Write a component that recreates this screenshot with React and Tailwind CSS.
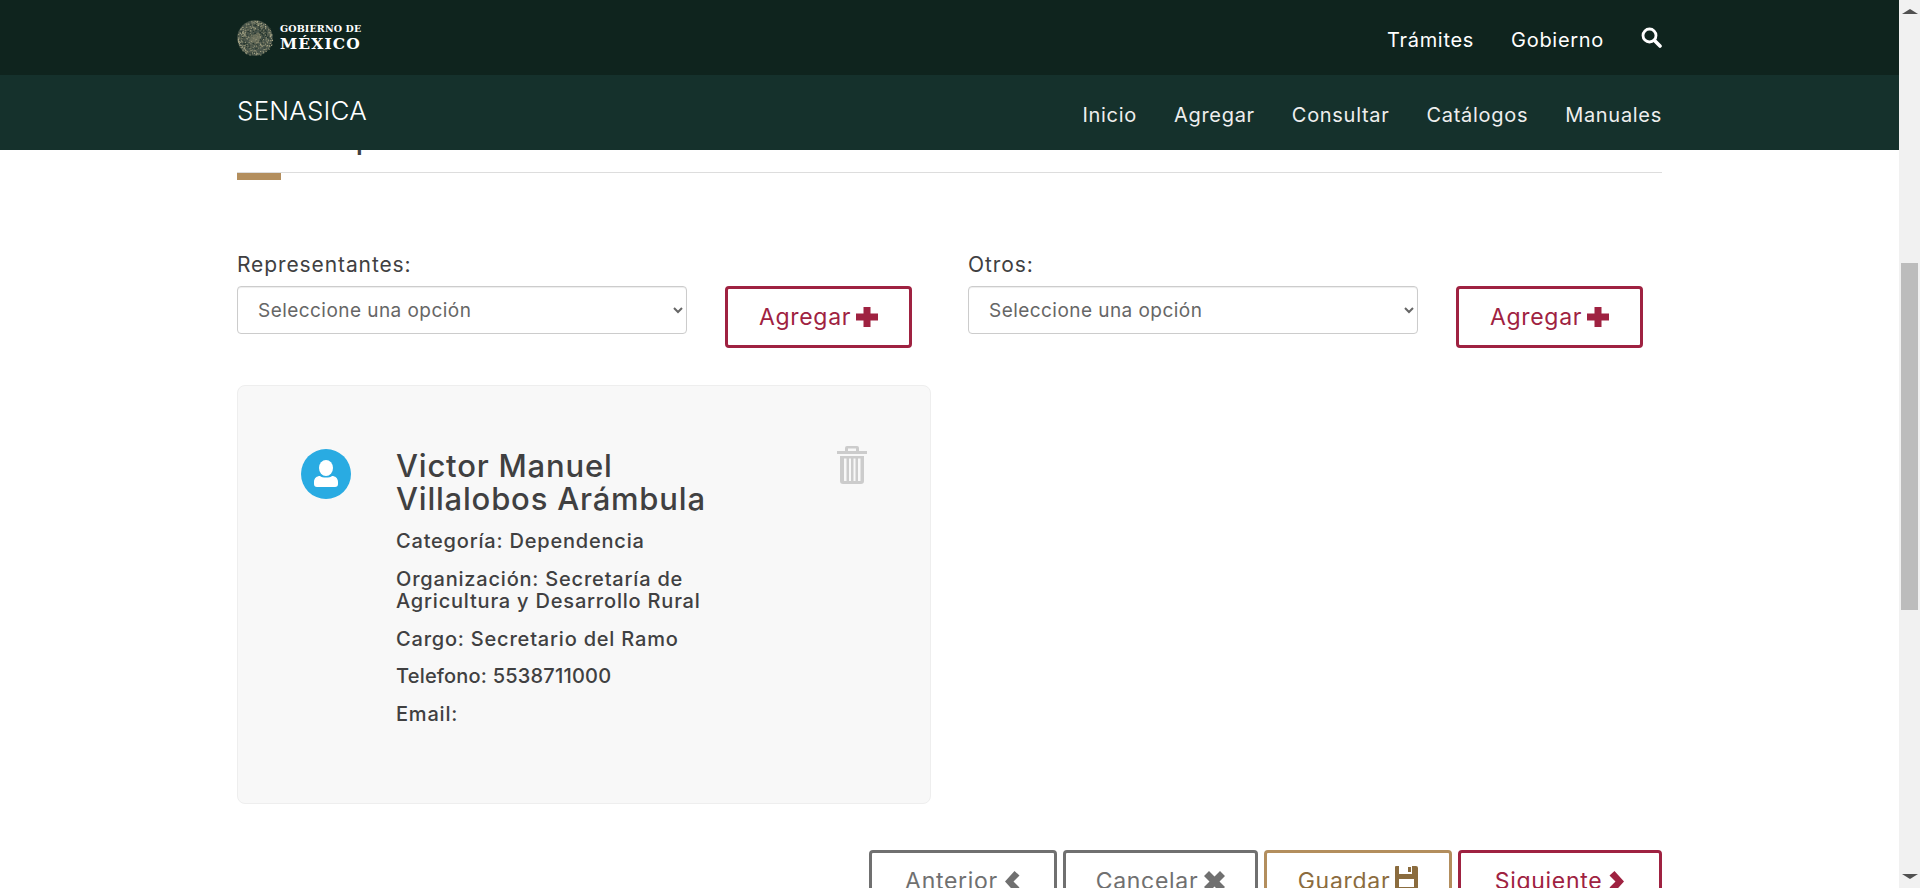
import React from "react";

const font = { fontFamily: "Inter, 'Noto Sans', sans-serif" };

function Emblem() {
  const dots = [];
  let seed = 17;
  const next = () => {
    seed = (seed * 16807) % 2147483647;
    return seed / 2147483647;
  };
  for (let i = 0; i < 520; i++) {
    const a = next() * Math.PI * 2;
    const r = 17.6 * Math.sqrt(next());
    const t = next();
    const tone = r > 13 ? (t < 0.5 ? "#b3b08f" : t < 0.8 ? "#757860" : "#26352d") : t < 0.3 ? "#a5a384" : t < 0.65 ? "#5f6452" : "#1f3029";
    dots.push(<rect key={i} x={18 + r * Math.cos(a)} y={18 + r * Math.sin(a)} width="1" height="1" fill={tone} />);
  }
  return (
    <svg width="36" height="36" viewBox="0 0 36 36" fill="none">
      <circle cx="18" cy="18" r="17.8" fill="#48544a" />
      {dots}
      <path d="M12 21c1-4 4-7 7-7 1-2 3-2 4 0l2 1-2 1c1 3 0 6-3 7l-1 2-2-2c-2 0-4-.5-5-2z" fill="#8f8e72" opacity="0.5" />
    </svg>
  );
}

function Logo() {
  return (
    <div className="flex items-center gap-[7px]">
      <Emblem />
      <div className="text-white" style={{ fontFamily: "'DejaVu Serif', 'Liberation Serif', serif" }}>
        <div className="text-[9.5px] font-bold leading-[12px] tracking-[0.15px] whitespace-nowrap">GOBIERNO DE</div>
        <div className="text-[15.5px] font-bold leading-[17px] tracking-[1.15px] whitespace-nowrap">MÉXICO</div>
      </div>
    </div>
  );
}

function SearchIcon() {
  return (
    <svg width="21" height="21" viewBox="0 0 21 21" fill="none" className="-mt-[1px]">
      <circle cx="8.500" cy="8.500" r="6.500" stroke="#ffffff" strokeWidth="2.800" />
      <path d="M13.500 13.500L19 19" stroke="#ffffff" strokeWidth="3.600" strokeLinecap="round" />
    </svg>
  );
}

function Header() {
  return (
    <header className="relative z-10 shrink-0 text-white">
      <div className="h-[75px] bg-[#0f241e]">
        <div className="mx-[237px] h-full flex items-center justify-between">
          <Logo />
          <nav className="flex items-center gap-[37px] text-[20px] tracking-[0.7px]">
            <span className="mt-[4px]">Trámites</span>
            <span className="mt-[4px]">Gobierno</span>
            <SearchIcon />
          </nav>
        </div>
      </div>
      <div className="h-[75px] bg-[#15312c]">
        <div className="mx-[237px] h-full flex justify-between">
          <div className="text-[26px] mt-[18px] leading-[36px] font-light tracking-[0.2px]">SENASICA</div>
          <nav className="flex gap-[37px] text-[20px] tracking-[0.7px] mt-[27px] leading-[27px] text-[#eeeeee]">
            <span>Inicio</span>
            <span>Agregar</span>
            <span>Consultar</span>
            <span>Catálogos</span>
            <span>Manuales</span>
          </nav>
        </div>
      </div>
    </header>
  );
}

function PlusIcon() {
  return (
    <svg width="22" height="20" viewBox="0 0 22 20" fill="currentColor">
      <path d="M7.500 0h7v6.500H22v7h-7.500V20h-7v-6.500H0v-7h7.500z" />
    </svg>
  );
}

function ChevronLeftIcon() {
  return (
    <svg width="17" height="21" viewBox="0 0 17 21" fill="currentColor">
      <path d="M10.500 0L15.500 4.500 9.500 10.500 15.500 16.500 10.500 21 1 10.500z" />
    </svg>
  );
}

function ChevronRightIcon() {
  return (
    <svg width="17" height="21" viewBox="0 0 17 21" fill="currentColor">
      <path d="M6.500 0L1.500 4.500 7.500 10.500 1.500 16.500 6.500 21 16 10.500z" />
    </svg>
  );
}

function CrossIcon() {
  return (
    <svg width="21" height="21" viewBox="0 0 21 21" fill="currentColor">
      <path d="M5 0l5.500 5.500L16 0l5 5-5.500 5.500L21 16l-5 5-5.500-5.500L5 21l-5-5 5.500-5.500L0 5z" />
    </svg>
  );
}

function SaveIcon() {
  return (
    <svg width="23" height="24" viewBox="0 0 23 24" fill="currentColor" className="-mt-[6px]">
      <path fillRule="evenodd" d="M1 0h3v8h13V0h4a2 2 0 0 1 2 2v21a1 1 0 0 1-1 1H1a1 1 0 0 1-1-1V1a1 1 0 0 1 1-1zM4 13v8h15v-8z" />
      <path d="M13 1h3v5h-3z" />
    </svg>
  );
}

function AddField({ label }) {
  return (
    <div className="w-[701px] shrink-0 flex gap-[38px]">
      <div className="w-[450px]">
        <label className="block text-[21px] leading-[27px] mb-[8px] -mt-[1px] text-[#404041] tracking-[0.9px]">{label}</label>
        <select className="w-full h-[48px] pl-[16px] pr-[8px] bg-white border border-[#cccccc] rounded-[4px] text-[19px] tracking-[0.45px] text-[#666666] shadow-[inset_0_1px_1px_rgba(0,0,0,0.075)]" style={font}>
          <option>Seleccione una opción</option>
        </select>
      </div>
      <button className="mt-[34px] w-[187px] h-[62px] border-[3px] border-[#9f2241] rounded-[4px] text-[#9f2241] text-[23px] tracking-[0.7px] flex items-center justify-center gap-[5px] bg-white">
        Agregar <PlusIcon />
      </button>
    </div>
  );
}

function TrashIcon() {
  return (
    <svg width="30" height="38" viewBox="0 0 30 38" fill="#cccccc">
      <path d="M10 0h10a2 2 0 0 1 2 2v3h8v3H0V5h8V2a2 2 0 0 1 2-2zm1 2.500V5h8V2.500z" fillRule="evenodd" />
      <path fillRule="evenodd" d="M3 10h24v25a3 3 0 0 1-3 3H6a3 3 0 0 1-3-3zm4 2.500V35h2.500V12.500zm5 0V35h2V12.500zm4.500 0V35h2V12.500zm4.500 0V35h2.500V12.500z" />
    </svg>
  );
}

function Avatar() {
  return (
    <svg width="50" height="50" viewBox="0 0 50 50" className="shrink-0">
      <circle cx="25" cy="25" r="25" fill="#29abe2" />
      <ellipse cx="25" cy="19" rx="7" ry="8" fill="#ffffff" />
      <path d="M13 33c0-4 3-6 6-6 2 2 10 2 12 0 3 0 6 2 6 6v2a3 3 0 0 1-3 3H16a3 3 0 0 1-3-3z" fill="#ffffff" />
    </svg>
  );
}

function PersonCard() {
  return (
    <div className="mt-[37px] w-[694px] h-[419px] bg-[#f8f8f8] border border-[#eeeeee] rounded-[8px] flex pl-[63px] pr-[63px] pt-[63px] text-[#404041]">
      <Avatar />
      <div className="ml-[45px] w-[330px]">
        <h3 className="text-[31px] font-medium leading-[33px] tracking-[0.8px] whitespace-nowrap">Victor Manuel<br />Villalobos Arámbula</h3>
        <div className="mt-[15px] text-[20px] font-medium leading-[22px] tracking-[0.8px] flex flex-col gap-[15.800px]">
          <p>Categoría: Dependencia</p>
          <p>Organización: Secretaría de Agricultura y Desarrollo Rural</p>
          <p>Cargo: Secretario del Ramo</p>
          <p className="tracking-[0.2px]">Telefono: 5538711000</p>
          <p>Email:</p>
        </div>
      </div>
      <div className="ml-auto -mt-[3px]">
        <TrashIcon />
      </div>
    </div>
  );
}

function ActionButton({ border, text, width, icon, label, gap }) {
  return (
    <button className={`h-[62px] border-[3px] rounded-[4px] text-[23px] tracking-[0.7px] flex items-center justify-center bg-white ${border} ${text} ${width} ${gap}`}>
      {label} {icon}
    </button>
  );
}

function Scrollbar() {
  return (
    <div className="w-[21px] shrink-0 h-full bg-[#f1f1f1] flex flex-col items-center justify-between py-[9px] relative">
      <div className="w-0 h-0 border-x-[8px] border-x-transparent border-b-[5px] border-b-[#505050]" />
      <div className="w-0 h-0 border-x-[8px] border-x-transparent border-t-[5px] border-t-[#505050]" />
      <div className="absolute top-[263px] left-[2px] w-[17px] h-[347px] bg-[#bcbcbc]" />
    </div>
  );
}

export default function App() {
  return (
    <div className="h-[888px] w-full overflow-hidden flex bg-white" style={font}>
      <div className="flex-1 min-w-0 flex flex-col h-full">
        <Header />
        <main className="px-[237px] -mt-[44px]">
          <h2 className="text-[36px] leading-[46px] h-[66px] text-[#404041] pt-[6px] tracking-[1.6px] whitespace-nowrap">Datos personales</h2>
          <div className="border-b border-[#dddddd]" />
          <div className="w-[44px] h-[7px] bg-[#b38e5d]" />
          <div className="mt-[72px] flex gap-[30px]">
            <AddField label="Representantes:" />
            <AddField label="Otros:" />
          </div>
          <PersonCard />
          <div className="mt-[46px] flex justify-end gap-[6px]">
            <ActionButton border="border-[#707070]" text="text-[#707070]" width="w-[188px]" gap="gap-[6px]" label="Anterior" icon={<ChevronLeftIcon />} />
            <ActionButton border="border-[#707070]" text="text-[#707070]" width="w-[195px]" gap="gap-[6px]" label="Cancelar" icon={<CrossIcon />} />
            <ActionButton border="border-[#b38e5d]" text="text-[#8b6c3e]" width="w-[188px]" gap="gap-[5px]" label="Guardar" icon={<SaveIcon />} />
            <ActionButton border="border-[#9f2241]" text="text-[#9f2241]" width="w-[204px]" gap="gap-[6px]" label="Siguiente" icon={<ChevronRightIcon />} />
          </div>
        </main>
      </div>
      <Scrollbar />
    </div>
  );
}
